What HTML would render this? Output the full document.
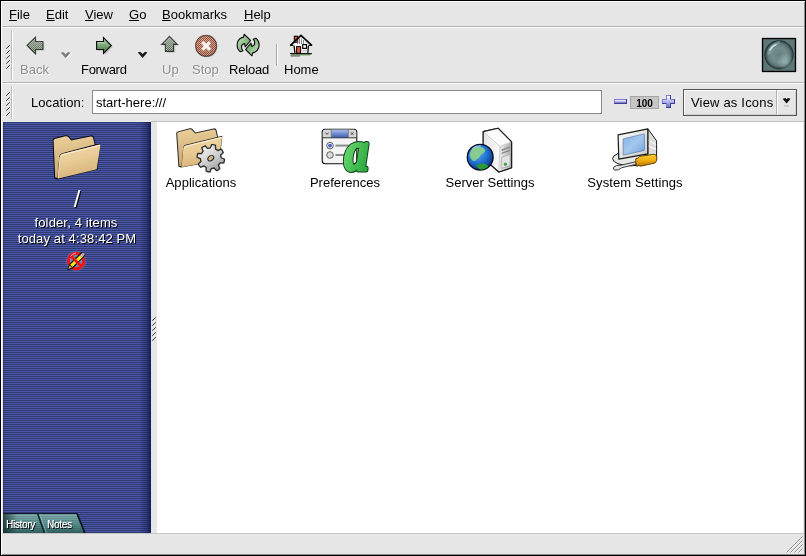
<!DOCTYPE html>
<html><head><meta charset="utf-8">
<style>
html,body{margin:0;padding:0;}
body{width:806px;height:556px;position:relative;overflow:hidden;background:#e6e6e6;font-family:"Liberation Sans",sans-serif;font-size:13px;color:#000;}
.abs{position:absolute;}
.t{position:absolute;white-space:nowrap;line-height:16px;height:16px;}
.hsep{position:absolute;left:2px;width:802px;height:1px;}
.dis{color:#8c8c8c;text-shadow:1px 1px 0 #fff;}
.sh{color:#fff;text-shadow:1px 1px 0 #000;}
.c{text-align:center;}
#side{left:3px;top:122px;width:148px;height:411px;
 background:
  linear-gradient(to right,rgba(10,14,70,.3) 0,rgba(10,14,70,0) 2px,rgba(10,14,70,0) 136px,rgba(8,10,60,.3) 143px,rgba(8,10,60,.68) 148px),
  repeating-linear-gradient(to bottom,#303a72 0,#303a72 1px,#4b58a8 1px,#4b58a8 2px);}
</style></head><body>
<div id="root" style="position:absolute;left:0;top:0;width:806px;height:556px;will-change:transform;">
<!-- window frame -->
<div class="abs" style="left:0;top:0;width:806px;height:556px;background:#000"></div>
<div class="abs" style="left:1px;top:1px;width:804px;height:554px;background:#fff"></div>
<div class="abs" style="left:2px;top:2px;width:803px;height:553px;background:#8c8c8c"></div>
<div class="abs" style="left:2px;top:2px;width:802px;height:552px;background:#e6e6e6"></div>

<!-- menubar -->
<div class="t" style="left:9px;top:7px"><u>F</u>ile</div>
<div class="t" style="left:46px;top:7px"><u>E</u>dit</div>
<div class="t" style="left:85px;top:7px"><u>V</u>iew</div>
<div class="t" style="left:129px;top:7px"><u>G</u>o</div>
<div class="t" style="left:162px;top:7px"><u>B</u>ookmarks</div>
<div class="t" style="left:244px;top:7px"><u>H</u>elp</div>
<div class="hsep" style="top:26px;background:#b2b2b2"></div>
<div class="hsep" style="top:27px;background:#fff"></div>

<!-- toolbar labels -->
<div class="t dis" style="left:20px;top:62px">Back</div>
<div class="t" style="left:81px;top:62px;letter-spacing:-0.3px">Forward</div>
<div class="t dis" style="left:162px;top:62px">Up</div>
<div class="t dis" style="left:192px;top:62px">Stop</div>
<div class="t" style="left:229px;top:62px;letter-spacing:-.2px">Reload</div>
<div class="t" style="left:284px;top:62px">Home</div>
<div class="hsep" style="top:82px;background:#b2b2b2"></div>
<div class="hsep" style="top:83px;background:#fff"></div>

<!-- location bar -->
<div class="t" style="left:31px;top:95px;letter-spacing:.08px">Location:</div>
<div class="abs" style="left:92px;top:90px;width:508px;height:22px;background:#fff;border:1px solid #8a8a8a;"></div>
<div class="t" style="left:96px;top:95px">start-here:///</div>
<div class="abs" style="left:630px;top:96px;width:27px;height:11px;background:#c6c6c6;border:1px solid #a6a6a6;"></div>
<div class="t c" style="left:630px;top:96px;width:29px;font-size:10px;font-weight:bold;line-height:15px;height:15px">100</div>
<div class="abs" style="left:683px;top:89px;width:112px;height:25px;border:1px solid #555;background:#e6e6e6;box-shadow:inset 1px 1px 0 #fff,inset -1px -1px 0 #cfcfcf;"></div>
<div class="abs" style="left:776px;top:90px;width:1px;height:25px;background:#b2b2b2"></div>
<div class="abs" style="left:777px;top:90px;width:1px;height:25px;background:#fff"></div>
<div class="t" style="left:691px;top:95px;letter-spacing:0.18px">View as Icons</div>
<div class="hsep" style="top:120px;background:#e6e6e6"></div>
<div class="hsep" style="top:121px;background:#e9e9e9"></div>

<!-- side pane -->
<div class="abs" id="side"></div>
<div class="t sh c" style="left:3px;width:148px;top:186px;font-size:24px;line-height:26px;height:26px">/</div>
<div class="t sh c" style="left:2px;width:148px;top:215px;letter-spacing:.14px">folder, 4 items</div>
<div class="t sh c" style="left:3px;width:148px;top:231px;letter-spacing:.12px">today at 4:38:42 PM</div>

<!-- main -->
<div class="abs" style="left:151px;top:121px;width:653px;height:1px;background:#c0c0c0"></div>
<div class="abs" id="main" style="left:157px;top:122px;width:646px;height:411px;background:#fff;"></div>
<div class="t c" style="left:151px;width:100px;top:175px;letter-spacing:.05px">Applications</div>
<div class="t c" style="left:295px;width:100px;top:175px">Preferences</div>
<div class="t c" style="left:440px;width:100px;top:175px">Server Settings</div>
<div class="t c" style="left:585px;width:100px;top:175px;letter-spacing:.1px">System Settings</div>

<!-- status -->
<div class="hsep" style="top:533px;background:#c8c8c8"></div>

<!-- tabs text -->
<div class="t sh" style="left:6px;top:518px;font-size:10px;line-height:14px;height:14px;z-index:5;letter-spacing:-.3px;text-shadow:1px 1px 0 #000,.3px 0 0 #fff">History</div>
<div class="t sh" style="left:47px;top:518px;font-size:10px;line-height:14px;height:14px;z-index:5;letter-spacing:-.3px;text-shadow:1px 1px 0 #000,.3px 0 0 #fff">Notes</div>

<svg class="abs" style="left:0;top:0" width="806" height="556" viewBox="0 0 806 556">
<defs>
<pattern id="chk" width="2" height="2" patternUnits="userSpaceOnUse"><rect x="0" y="0" width="1" height="1" fill="#fff"/><rect x="1" y="1" width="1" height="1" fill="#fff"/></pattern>
<mask id="stip" maskUnits="userSpaceOnUse" x="0" y="0" width="806" height="556"><rect x="0" y="0" width="806" height="556" fill="url(#chk)" shape-rendering="crispEdges"/></mask>

<linearGradient id="gfw" x1="0" y1="0" x2="0" y2="1"><stop offset="0" stop-color="#a9cba4"/><stop offset=".45" stop-color="#7fae7a"/><stop offset="1" stop-color="#3f6e3d"/></linearGradient>
<linearGradient id="gdis" x1="0" y1="0" x2="0" y2="1"><stop offset="0" stop-color="#b9cdb6"/><stop offset="1" stop-color="#4c6a4a"/></linearGradient>
<radialGradient id="gstop" cx=".4" cy=".35" r=".7"><stop offset="0" stop-color="#c86a48"/><stop offset="1" stop-color="#8e3a1e"/></radialGradient>
<linearGradient id="grel" x1="0" y1="0" x2="1" y2="1"><stop offset="0" stop-color="#d4ecd0"/><stop offset=".5" stop-color="#8cc088"/><stop offset="1" stop-color="#5a9a58"/></linearGradient>
</defs>
<!-- handles -->
<g stroke="#333" stroke-width=".95" fill="none">
<path d="M6.2 48.7L9.8 45.3M6.2 53.7L9.8 50.3M6.2 58.7L9.8 55.3M6.2 63.7L9.8 60.3M6.2 68.7L9.8 65.3"/>
<path d="M6.2 95.7L9.8 92.3M6.2 100.7L9.8 97.3M6.2 105.7L9.8 102.3M6.2 110.7L9.8 107.3M6.2 115.7L9.8 112.3"/>
<path d="M152.2 320.7L155.8 317.3M152.2 325.7L155.8 322.3M152.2 330.7L155.8 327.3M152.2 335.7L155.8 332.3M152.2 340.7L155.8 337.3"/>
</g>
<g shape-rendering="crispEdges">
<rect x="11" y="31" width="1" height="49" fill="#bcbcbc"/><rect x="12" y="31" width="1" height="49" fill="#fff"/>
<rect x="11" y="87" width="1" height="32" fill="#bcbcbc"/><rect x="12" y="87" width="1" height="32" fill="#fff"/>
<rect x="276" y="44" width="1" height="22" fill="#a8a8a8"/><rect x="277" y="44" width="1" height="22" fill="#fff"/>
</g>
<!-- back (disabled) -->
<path d="M28.5 47L36.5 39V43H44.5V51H36.5V55.5Z" fill="#000" opacity=".10"/>
<g mask="url(#stip)"><path d="M27 45.5L35.5 37V41.5H43V49.5H35.5V54Z" fill="url(#gdis)"/></g>
<path d="M27 45.5L35.5 37V41.5H43V49.5H35.5V54Z" fill="#5a6a58" fill-opacity=".35" stroke="#111" stroke-opacity=".72" stroke-width="1.1"/>
<!-- dropdown arrows -->
<path d="M61.8 53.8L64.3 53L66.6 55.3L69 53L71.5 53.8L66.6 59.2Z" fill="#fff"/>
<path d="M60.8 52.8L63.3 52L65.6 54.3L68 52L70.5 52.8L65.6 58.2Z" fill="#7f7f7f"/>
<path d="M137.8 52.6L140.3 51.8L142.6 54.1L145 51.8L147.4 52.6L142.6 58.1Z" fill="#1a1a1a"/>
<!-- forward -->
<path d="M98 43.5L105 43.5V39.5L112.8 46.8L105 55V51H98Z" fill="#000" opacity=".15"/>
<path d="M96.6 41.5H103.5V37.7L111.3 45.5L103.5 53.3V49.5H96.6Z" fill="url(#gfw)" stroke="#0c0c0c" stroke-width="1.1" stroke-linejoin="miter"/>
<path d="M97.6 42.8H104.4" stroke="#cfe6cc" stroke-width="1" opacity=".8"/>
<!-- up (disabled) -->
<path d="M171 37.5L179.5 46H175.2V53H166.8V46H162.5Z" fill="#000" opacity=".10"/>
<g mask="url(#stip)"><path d="M169.5 36.4L177.4 44.4H173.6V51.4H165.4V44.4H161.6Z" fill="url(#gdis)"/></g>
<path d="M169.5 36.4L177.4 44.4H173.6V51.4H165.4V44.4H161.6Z" fill="#5a6a58" fill-opacity=".3" stroke="#111" stroke-opacity=".72" stroke-width="1.1"/>
<!-- stop (disabled) -->
<circle cx="207" cy="47" r="10.6" fill="#000" opacity=".10"/>
<g mask="url(#stip)"><circle cx="206.1" cy="45.9" r="10.8" fill="url(#gstop)"/></g>
<circle cx="206.1" cy="45.9" r="10.5" fill="#a04a2c" fill-opacity=".32" stroke="#2a1a14" stroke-opacity=".6" stroke-width="1.1"/>
<path d="M202.3 42.2L210 49.9M210 42.2L202.3 49.9" stroke="#fff" stroke-width="3.1" opacity=".92"/>
<!-- reload -->
<g id="rel">
<path d="M240.3 51.8C237.6 49.5 236.6 46 237.4 42.8C238.2 39.8 240.4 37.7 243.6 37.1L244.2 34.2L250.6 40.5L245.2 46.8L244.6 43.6C243 43.8 241.6 45 241.5 46.8C241.4 48.4 242 49.8 243 50.8Z" fill="url(#grel)" stroke="#0a0a0a" stroke-width="1.1" stroke-linejoin="round"/>
<path d="M240.3 51.8C237.6 49.5 236.6 46 237.4 42.8C238.2 39.8 240.4 37.7 243.6 37.1L244.2 34.2L250.6 40.5L245.2 46.8L244.6 43.6C243 43.8 241.6 45 241.5 46.8C241.4 48.4 242 49.8 243 50.8Z" fill="url(#grel)" stroke="#0a0a0a" stroke-width="1.1" stroke-linejoin="round" transform="rotate(180 248.1 45)"/>
</g>
<!-- home -->
<g>
<path d="M293.6 45.5L301 37.5L308.6 45.5V53.3H293.6Z" fill="#fff"/>
<rect x="294.3" y="36.2" width="3.4" height="6" fill="#e0583a" stroke="#000" stroke-width="1"/>
<path d="M290.2 45.6L301 35.3L312 45.6" fill="none" stroke="#000" stroke-width="1.7" stroke-linejoin="miter"/>
<path d="M293.2 45.4H290.3M308.8 45.4H311.8" stroke="#000" stroke-width="1.2"/>
<path d="M294 45.5L295 53.3M308.4 45.5L307.8 53.3" stroke="#000" stroke-width="1.3"/>
<path d="M297.5 40V44M299.5 38.5V44M301.5 38.5V44M303.5 40V44" stroke="#555" stroke-width=".7"/>
<rect x="296.6" y="46.6" width="4" height="6.6" fill="#e4583c" stroke="#000" stroke-width="1"/>
<rect x="302.7" y="44.6" width="3.8" height="3.8" fill="#fff" stroke="#000" stroke-width="1.2"/>
<path d="M301.5 50.5H307.5M301.5 52H307.5" stroke="#aaa" stroke-width=".6"/>
<path d="M290 53.6H312" stroke="#000" stroke-width="1"/>
<path d="M292 54.7H310" stroke="#5c8a50" stroke-width="1.3"/>
<path d="M290.5 55.8L292 54.6M310.5 54.6L312 53.2M291 56H300" stroke="#222" stroke-width=".7"/>
</g>
<!-- throbber -->
<defs>
<radialGradient id="gth" cx=".5" cy=".5" r=".5"><stop offset="0" stop-color="#667e7e"/><stop offset=".5" stop-color="#748e8e"/><stop offset=".78" stop-color="#5e7676"/><stop offset=".92" stop-color="#354747"/><stop offset="1" stop-color="#1c2828"/></radialGradient>
<radialGradient id="gth2" cx=".72" cy=".74" r=".3"><stop offset="0" stop-color="#b8d4d4" stop-opacity=".55"/><stop offset="1" stop-color="#b8d4d4" stop-opacity="0"/></radialGradient>
<linearGradient id="gth3" x1=".2" y1="0" x2=".8" y2="1"><stop offset="0" stop-color="#000" stop-opacity="0"/><stop offset="1" stop-color="#000" stop-opacity="0"/></linearGradient>
</defs>
<rect x="761.5" y="37.5" width="35" height="35" fill="none" stroke="#f4f4f4" stroke-width="1"/>
<rect x="762.5" y="38.5" width="33" height="33" fill="#5d7676" stroke="#000" stroke-width="1.4"/>
<circle cx="779" cy="54.8" r="14.6" fill="url(#gth)"/>
<circle cx="779" cy="54.8" r="14.6" fill="url(#gth2)"/>
<path d="M770 50Q771.8 46 776 44.6" stroke="#e4fafa" stroke-width="1.5" fill="none" stroke-linecap="round" opacity=".85"/>
<path d="M769 53Q770.6 45.4 778.6 42.6" stroke="#c0dcdc" stroke-width="3.4" fill="none" stroke-linecap="round" opacity=".3"/>

<!-- zoom controls -->
<defs>
<linearGradient id="gz" x1="0" y1="0" x2="0" y2="1"><stop offset="0" stop-color="#ffffff"/><stop offset=".5" stop-color="#b8b8ec"/><stop offset="1" stop-color="#7070c8"/></linearGradient>
<linearGradient id="gfold" x1="0" y1="0" x2=".3" y2="1"><stop offset="0" stop-color="#f3dcae"/><stop offset=".5" stop-color="#e9cc96"/><stop offset="1" stop-color="#d8b57c"/></linearGradient>
<linearGradient id="gfoldb" x1="0" y1="0" x2=".2" y2="1"><stop offset="0" stop-color="#ecd09c"/><stop offset="1" stop-color="#c9a66e"/></linearGradient>
<linearGradient id="gtab" x1="0" y1="0" x2="0" y2="1"><stop offset="0" stop-color="#82b0b0"/><stop offset=".5" stop-color="#5e9494"/><stop offset="1" stop-color="#356666"/></linearGradient>
<pattern id="strp" width="2" height="2" patternUnits="userSpaceOnUse"><rect x="0" y="0" width="2" height="1" fill="#000" opacity=".14"/></pattern>
<linearGradient id="gtabl" x1="0" y1="0" x2="1" y2="0"><stop offset="0" stop-color="#0a2020" stop-opacity=".7"/><stop offset="1" stop-color="#0a2020" stop-opacity="0"/></linearGradient>
</defs>
<g shape-rendering="crispEdges">
<rect x="614" y="99" width="13" height="5" fill="#3c3c9c"/>
<rect x="614" y="99" width="12" height="4" fill="#7c7cd0"/>
<rect x="615" y="100" width="11" height="3" fill="url(#gz)"/>
<path d="M666 95H671V99H675V104H671V108H666V104H662V99H666Z" fill="#3c3c9c"/>
<path d="M666 95H670V99H674V103H670V107H666V103H662V99H666Z" fill="#7c7cd0"/>
<path d="M667 96H670V100H674V103H670V107H667V103H663V100H667Z" fill="url(#gz)"/>
</g>
<!-- option arrow -->
<path d="M782.6 98.8L785.4 98.1L786.6 99.3L787.8 98.1L790.6 98.8L786.6 103.4Z" fill="#111"/>
<rect x="784" y="105.2" width="5" height="1.5" fill="#c2c2c2"/>
<!-- side folder -->
<path d="M54.2 178.6L52.6 140.2Q52.6 138.4 54.4 138L65.4 135.3Q67.6 134.9 68.9 136.3L71.6 139.5L90.6 135.4Q93.4 135 94 137.4L95.6 144.5L100.6 143.4 97.4 169.6 57.6 179.4Z" fill="#000" opacity=".85"/>
<path d="M55.2 177.5L53.6 140.4Q53.6 139.2 54.8 138.9L65.4 136.3Q67.2 136 68.2 137L71.2 140.6L90.6 136.4Q92.6 136.2 93 137.8L94.7 144.6L62 153.2Q59.6 154 59.3 156.6L57.4 177.8Z" fill="url(#gfoldb)"/>
<path d="M57.7 178.4L59.5 157.4Q59.8 154.6 62.4 153.8L99.6 144.4Q100.6 144.2 100.4 145.6L96.8 168.6Q96.7 169.3 96 169.5L58.6 178.6Z" fill="url(#gfold)"/>
<path d="M60.2 157.6Q60.5 155.2 62.8 154.6L99.6 145.2" stroke="#fff6de" stroke-width="1" fill="none" opacity=".9"/>
<path d="M58 178.2L60 157.4" stroke="#fff6de" stroke-width=".8" fill="none" opacity=".7"/>
<!-- tabs -->
<path d="M3 514H37.4L44 533H3Z" fill="url(#gtab)"/>
<path d="M37.4 514H77L84.6 533H44Z" fill="url(#gtab)"/>
<rect x="3" y="514" width="14" height="19" fill="url(#gtabl)"/>
<path d="M3 514H77L84.6 533H3Z" fill="url(#strp)"/>
<path d="M37.8 514L44.4 533" stroke="#0a2626" stroke-width="1.6"/>
<path d="M39.8 514L46.4 533" stroke="#9cc8c8" stroke-width=".8" opacity=".7"/>
<path d="M77 513.5L84.8 533" stroke="#081c1c" stroke-width="1.8"/>
<path d="M3 513.5H77.4" stroke="#10142c" stroke-width="1"/>
<!-- resize grip -->
<g stroke-width="1">
<path d="M802.5 536.5L786.5 552.5M802.5 540.5L790.5 552.5M802.5 544.5L794.5 552.5M802.5 548.5L798.5 552.5" stroke="#8c8c8c"/>
<path d="M802.5 537.5L787.5 552.5M802.5 541.5L791.5 552.5M802.5 545.5L795.5 552.5M802.5 549.5L799.5 552.5" stroke="#fff"/>
</g>


<!-- Applications icon -->
<defs>
<linearGradient id="ggear" x1="0" y1="0" x2="1" y2="1"><stop offset="0" stop-color="#fdfdfd"/><stop offset=".5" stop-color="#d0d0d0"/><stop offset="1" stop-color="#8e8e8e"/></linearGradient>
<radialGradient id="gglobe" cx=".4" cy=".35" r=".7"><stop offset="0" stop-color="#5aa8f0"/><stop offset=".55" stop-color="#1f6fd0"/><stop offset="1" stop-color="#0a2e7a"/></radialGradient>
<linearGradient id="gsrvL" x1="0" y1="0" x2="1" y2="0"><stop offset="0" stop-color="#e4e4e4"/><stop offset="1" stop-color="#fafafa"/></linearGradient>
<linearGradient id="gsrvF" x1="0" y1="0" x2="1" y2="0"><stop offset="0" stop-color="#f4f4f4"/><stop offset="1" stop-color="#a8a8a8"/></linearGradient>
<linearGradient id="gscr" x1="0" y1="0" x2="1" y2="1"><stop offset="0" stop-color="#7fb2e6"/><stop offset=".5" stop-color="#a4c8ee"/><stop offset="1" stop-color="#6aa2de"/></linearGradient>
<linearGradient id="gbez" x1="0" y1="0" x2="1" y2="1"><stop offset="0" stop-color="#ffffff"/><stop offset="1" stop-color="#c8c8c8"/></linearGradient>
<linearGradient id="ghan" x1="0" y1="0" x2="0" y2="1"><stop offset="0" stop-color="#ffd23c"/><stop offset=".5" stop-color="#f0ae10"/><stop offset="1" stop-color="#b87800"/></linearGradient>
<linearGradient id="ga" x1="0" y1="0" x2="1" y2="1"><stop offset="0" stop-color="#8ee28e"/><stop offset=".5" stop-color="#4cc458"/><stop offset="1" stop-color="#1f9a34"/></linearGradient>
<linearGradient id="gtitle" x1="0" y1="0" x2="0" y2="1"><stop offset="0" stop-color="#a8bcec"/><stop offset="1" stop-color="#3c5cb4"/></linearGradient>
</defs>
<g>
<path d="M178.4 166.8L176.2 133.4Q176.2 131.8 177.8 131.4L189.6 128.3Q191.6 127.9 192.8 129.2L195.4 132.4L213.4 128.4Q216 128 216.6 130.2L218 136.8L222.4 135.8 219.6 160.4 181.4 167.6Z" fill="#000" opacity=".85"/>
<path d="M179.3 165.8L177.2 133.6Q177.2 132.6 178.2 132.3L189.6 129.3Q191.2 129 192 129.9L195 133.5L213.4 129.4Q215.2 129.2 215.6 130.6L217.1 137L185.6 144.8Q183.4 145.4 183.2 147.8L181.4 166.2Z" fill="url(#gfoldb)"/>
<path d="M181.6 166.7L183.3 148.4Q183.5 146 185.8 145.4L221.2 136.8Q222.2 136.6 222 137.8L218.9 159.4Q218.8 160 218.2 160.2L182.4 166.9Z" fill="url(#gfold)"/>
<path d="M184 148.6Q184.2 146.6 186.2 146.2L221.2 137.6" stroke="#fff6de" stroke-width="1" fill="none" opacity=".9"/>
</g>
<!-- gear -->
<g transform="translate(211.6 159.2) rotate(12)"><path d="M10.1 -2.6L13.5 -2.0Q14.2 0.0 13.5 2.0L10.1 2.6L8.9 5.3L11.0 8.1Q10.0 10.0 8.1 11.0L5.3 8.9L2.6 10.1L2.0 13.5Q0.0 14.2 -2.0 13.5L-2.6 10.1L-5.3 8.9L-8.1 11.0Q-10.0 10.0 -11.0 8.1L-8.9 5.3L-10.1 2.6L-13.5 2.0Q-14.2 0.0 -13.5 -2.0L-10.1 -2.6L-8.9 -5.3L-11.0 -8.1Q-10.0 -10.0 -8.1 -11.0L-5.3 -8.9L-2.6 -10.1L-2.0 -13.5Q-0.0 -14.2 2.0 -13.5L2.6 -10.1L5.3 -8.9L8.1 -11.0Q10.0 -10.0 11.0 -8.1L8.9 -5.3Z" fill="#000" opacity=".18"/></g>
<g transform="translate(210.8 158.2) rotate(12)"><path d="M10.1 -2.6L13.5 -2.0Q14.2 0.0 13.5 2.0L10.1 2.6L8.9 5.3L11.0 8.1Q10.0 10.0 8.1 11.0L5.3 8.9L2.6 10.1L2.0 13.5Q0.0 14.2 -2.0 13.5L-2.6 10.1L-5.3 8.9L-8.1 11.0Q-10.0 10.0 -11.0 8.1L-8.9 5.3L-10.1 2.6L-13.5 2.0Q-14.2 0.0 -13.5 -2.0L-10.1 -2.6L-8.9 -5.3L-11.0 -8.1Q-10.0 -10.0 -8.1 -11.0L-5.3 -8.9L-2.6 -10.1L-2.0 -13.5Q-0.0 -14.2 2.0 -13.5L2.6 -10.1L5.3 -8.9L8.1 -11.0Q10.0 -10.0 11.0 -8.1L8.9 -5.3Z" fill="url(#ggear)" stroke="#2a2a2a" stroke-width="1.3" stroke-linejoin="round"/><ellipse cx="0" cy="0" rx="3.3" ry="2.3" transform="rotate(-52)" fill="#d8b880" stroke="#2a2a2a" stroke-width="1.1"/></g>
<!-- Preferences icon -->
<g>
<rect x="322.2" y="129.2" width="34.6" height="34.6" rx="3" fill="#f4f4f4" stroke="#111" stroke-width="1.1"/>
<path d="M322.8 137.6V132Q322.8 129.8 325 129.8H354Q356.2 129.8 356.2 132V137.6Z" fill="#d6d6d6"/>
<rect x="331.4" y="129.8" width="16.8" height="7.8" fill="url(#gtitle)"/>
<path d="M322.6 137.8H356.4" stroke="#222" stroke-width=".9"/>
<path d="M331.2 129.8V137.6M348.4 129.8V137.6" stroke="#555" stroke-width=".6"/>
<path d="M325.4 132.6L327 134.4L328.6 132.6" stroke="#444" stroke-width="1" fill="none"/>
<path d="M350.8 132.2L353.6 135M353.6 132.2L350.8 135" stroke="#444" stroke-width=".9"/>
<circle cx="330" cy="145.6" r="3.3" fill="#e8e8f8" stroke="#555" stroke-width=".9"/>
<circle cx="330" cy="145.6" r="1.9" fill="#4a5ec8"/>
<circle cx="330" cy="155" r="3.3" fill="#dcdcdc" stroke="#555" stroke-width=".9"/>
<path d="M335.4 145.6H351" stroke="#8a8a8a" stroke-width="2"/>
<path d="M335.4 155H348" stroke="#8a8a8a" stroke-width="2"/>
<g font-family="Liberation Serif, serif" font-weight="bold" font-style="italic" font-size="56" stroke-linejoin="round" transform="translate(344.6 169.8) scale(.86 1)">
<text x="0" y="0" fill="#0c3a14" stroke="#0c3a14" stroke-width="5.2">a</text>
<text x="0" y="0" fill="url(#ga)" stroke="url(#ga)" stroke-width="3">a</text>
</g>
</g>
<!-- Server Settings icon -->
<g>
<path d="M483.2 131.6L498 128.2L511.6 141.8V167.8L498.8 172L483.2 158Z" fill="#fff" stroke="#1a1a1a" stroke-width="1.1" stroke-linejoin="round"/>
<path d="M483.2 131.6L500 146.4L498.8 172L483.2 158Z" fill="url(#gsrvL)"/>
<path d="M500 146.4L511.6 141.8V167.8L498.8 172Z" fill="url(#gsrvF)"/>
<path d="M483.2 131.6L498 128.2L511.6 141.8L500 146.4Z" fill="#fbfbfb"/>
<path d="M483.2 131.6L500 146.4L511.6 141.8M500 146.4L498.8 172" stroke="#c4c4c4" stroke-width=".8" fill="none"/>
<path d="M501.6 150.2L510 147M501.6 153.4L510 150.2" stroke="#8c8c8c" stroke-width="1.5"/>
<path d="M501.4 157.4L510 154.4V165.6L501.2 168.6Z" fill="#e2e2e2" stroke="#a4a4a4" stroke-width=".7"/>
<circle cx="505.4" cy="164.2" r="1.3" fill="#3ab83a" stroke="#1a6a1a" stroke-width=".5"/>
<path d="M483.2 131.6L498 128.2L511.6 141.8V167.8L498.8 172L483.2 158Z" fill="none" stroke="#1a1a1a" stroke-width="1.1" stroke-linejoin="round"/>
<circle cx="480.2" cy="157.2" r="12.9" fill="url(#gglobe)" stroke="#050a20" stroke-width="1.3"/>
<path d="M471 150.6Q474 146.6 479.6 146.8Q484 147.4 485.4 150.4Q484.4 153.4 481 154.8Q479.6 158 476.6 159.4Q474.6 162 472.4 160.6Q469.2 157.4 469.8 153.6Z" fill="#8ed08a" opacity=".9"/>
<path d="M476.2 165.4Q480 163 484.6 163.6Q487 164.4 488.4 166.2Q485 169.6 480.4 169.8Q478 168.4 476.2 165.4Z" fill="#2c9a34"/>
<path d="M472 149Q476 145.4 481 146" stroke="#dff2ff" stroke-width="1.2" fill="none" opacity=".6"/>
</g>
<!-- System Settings icon -->
<g>
<path d="M647.8 128.8L656.6 140.8V159.2L647.8 160Z" fill="#dcdcdc" stroke="#1a1a1a" stroke-width="1"/>
<path d="M648.4 140.4L656.2 144.6M648.4 146L656.2 149.4" stroke="#fff" stroke-width="1"/>
<ellipse cx="631" cy="158.6" rx="18.4" ry="7.2" fill="#e8e8e8" stroke="#1a1a1a" stroke-width="1"/>
<path d="M618.1 134.8L647.8 128.8V153.8L618.8 159.2Z" fill="url(#gbez)" stroke="#1a1a1a" stroke-width="1.2" stroke-linejoin="round"/>
<path d="M623.2 138.9L644.4 133.9V150.4L623.2 155.1Z" fill="url(#gscr)" stroke="#5a7aa8" stroke-width=".7"/>
<path d="M613.6 167.2Q612.6 169.6 615 170.2Q619 170.4 621.6 167.8L636.4 164.2L635.6 161.8L621 165.2Q616 164.8 613.6 167.2Z" fill="#e4e4e4" stroke="#2a2a2a" stroke-width=".9"/>
<path d="M635.8 158.6L638 158.2L639.6 156.4L654 154.2Q656.6 154.4 656.8 157.6Q657 161.6 655 163L640.6 166.2L638.6 165.4L636.8 166.4Q635.4 163 635.8 158.6Z" fill="url(#ghan)" stroke="#5a3a00" stroke-width=".9"/>
</g>
<!-- emblem -->
<g>
<circle cx="76.1" cy="261" r="10.4" fill="#8a92d0" opacity=".28"/>
<circle cx="76.1" cy="261" r="7.7" fill="#dcdcec" fill-opacity=".3" stroke="#f01414" stroke-width="3"/>
<path d="M67.2 270.4L68.8 264.4L81.6 251.8L85.4 255.6L72.8 268.4Z" fill="#111"/>
<path d="M70.2 264.8L80 255.2L82.2 257.4L72.4 267Z" fill="#f6ea10"/>
<path d="M80 255.2L81.4 253.8L83.6 256L82.2 257.4Z" fill="#c8c8c8"/>
<path d="M81.4 253.8L82.2 253Q83.4 252.6 84.2 253.6Q84.8 254.6 84.4 255.2L83.6 256Z" fill="#f09aa0"/>
<path d="M68.4 268.9L69.6 265.2L72 267.6Z" fill="#d8a060"/>
<path d="M70.2 255.2L82 267" stroke="#f01414" stroke-width="2.8"/>
<path d="M70.4 256.4Q72.4 253.4 76 253" stroke="#ffb4b4" stroke-width="1" fill="none"/>
</g>

<!--MORE-->
</svg>
</div>
</body></html>
